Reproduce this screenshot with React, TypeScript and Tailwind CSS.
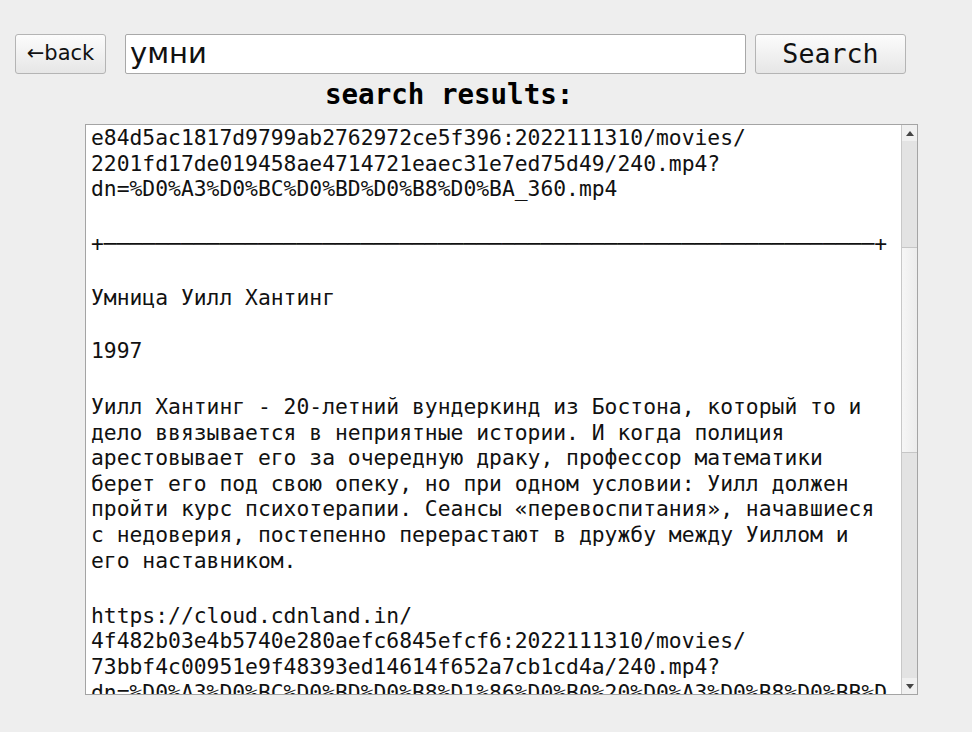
import React from "react";

const mono = { fontFamily: '"DejaVu Sans Mono", "Liberation Mono", monospace' };

const topLines = [
  "e84d5ac1817d9799ab2762972ce5f396:2022111310/movies/",
  "2201fd17de019458ae4714721eaec31e7ed75d49/240.mp4?",
  "dn=%D0%A3%D0%BC%D0%BD%D0%B8%D0%BA_360.mp4",
];

const description = [
  "Уилл Хантинг - 20-летний вундеркинд из Бостона, который то и",
  "дело ввязывается в неприятные истории. И когда полиция",
  "арестовывает его за очередную драку, профессор математики",
  "берет его под свою опеку, но при одном условии: Уилл должен",
  "пройти курс психотерапии. Сеансы «перевоспитания», начавшиеся",
  "с недоверия, постепенно перерастают в дружбу между Уиллом и",
  "его наставником.",
];

const linkLines = [
  "https://cloud.cdnland.in/",
  "4f482b03e4b5740e280aefc6845efcf6:2022111310/movies/",
  "73bbf4c00951e9f48393ed14614f652a7cb1cd4a/240.mp4?",
  "dn=%D0%A3%D0%BC%D0%BD%D0%B8%D1%86%D0%B0%20%D0%A3%D0%B8%D0%BB%D",
];

function Line({ children }: { children?: React.ReactNode }) {
  return <div className="h-[25.6px] whitespace-pre">{children}</div>;
}

function ScrollBar() {
  return (
    <div className="flex w-[16px] flex-col border-l border-[#c8c8c8] bg-[#e3e3e3]">
      {/* up arrow */}
      <div className="flex h-[16px] items-center justify-center bg-[#f0f0f0]">
        <div className="h-0 w-0 border-x-[4px] border-b-[5px] border-x-transparent border-b-[#444]" />
      </div>
      <div className="h-[106px]" />
      {/* thumb */}
      <div className="h-[206px] border-y border-[#c6c6c6] bg-gradient-to-r from-[#f6f6f6] to-[#ececec]" />
      <div className="flex-1" />
      {/* down arrow */}
      <div className="flex h-[16px] items-center justify-center bg-[#f0f0f0]">
        <div className="h-0 w-0 border-x-[4px] border-t-[5px] border-x-transparent border-t-[#444]" />
      </div>
    </div>
  );
}

export default function App() {
  return (
    <div className="h-[732px] w-[972px] overflow-hidden bg-[#eeeeee] text-black">
      {/* Top bar */}
      <div className="flex items-center pl-[15px] pt-[34px]">
        <button
          className="flex h-[40px] w-[91px] items-center justify-center rounded-[3px] border border-[#b4b4b4] bg-gradient-to-b from-[#fcfcfc] to-[#e6e6e6] text-[21px] text-[#111]"
          style={{ fontFamily: '"DejaVu Sans", sans-serif' }}
        >
          ←back
        </button>
        <div
          className="ml-[19px] flex h-[40px] w-[621px] items-center rounded-[2px] border border-[#a8a8a8] bg-white pl-[4px] text-[29px] text-[#111]"
          style={{ fontFamily: '"DejaVu Sans", sans-serif' }}
        >
          умни
        </div>
        <button
          className="ml-[9px] flex h-[40px] w-[151px] items-center justify-center rounded-[3px] border border-[#b4b4b4] bg-gradient-to-b from-[#fcfcfc] to-[#e6e6e6] text-[26.67px] text-[#111]"
          style={mono}
        >
          Search
        </button>
      </div>

      {/* Heading */}
      <div className="mt-[1px] h-[49px] pl-[325px] text-[27.5px] font-bold leading-[38px]" style={mono}>
        search results:
      </div>

      {/* Results box */}
      <div className="ml-[85px] flex h-[571px] w-[833px] border border-[#a4a4a4] bg-white">
        <div className="flex-1 overflow-hidden pl-[5px] text-[21.33px] leading-[25.6px] text-[#111]" style={mono}>
          {topLines.map((l) => (
            <Line key={l}>{l}</Line>
          ))}
          <div className="h-[28.8px]" />
          <Line>{"+" + "─".repeat(60) + "+"}</Line>
          <div className="h-[28.8px]" />
          <Line>Умница Уилл Хантинг</Line>
          <div className="h-[27.4px]" />
          <Line>1997</Line>
          <div className="h-[30.4px]" />
          {description.map((l) => (
            <Line key={l}>{l}</Line>
          ))}
          <div className="h-[29.8px]" />
          {linkLines.map((l) => (
            <Line key={l}>{l}</Line>
          ))}
        </div>
        <ScrollBar />
      </div>
    </div>
  );
}
